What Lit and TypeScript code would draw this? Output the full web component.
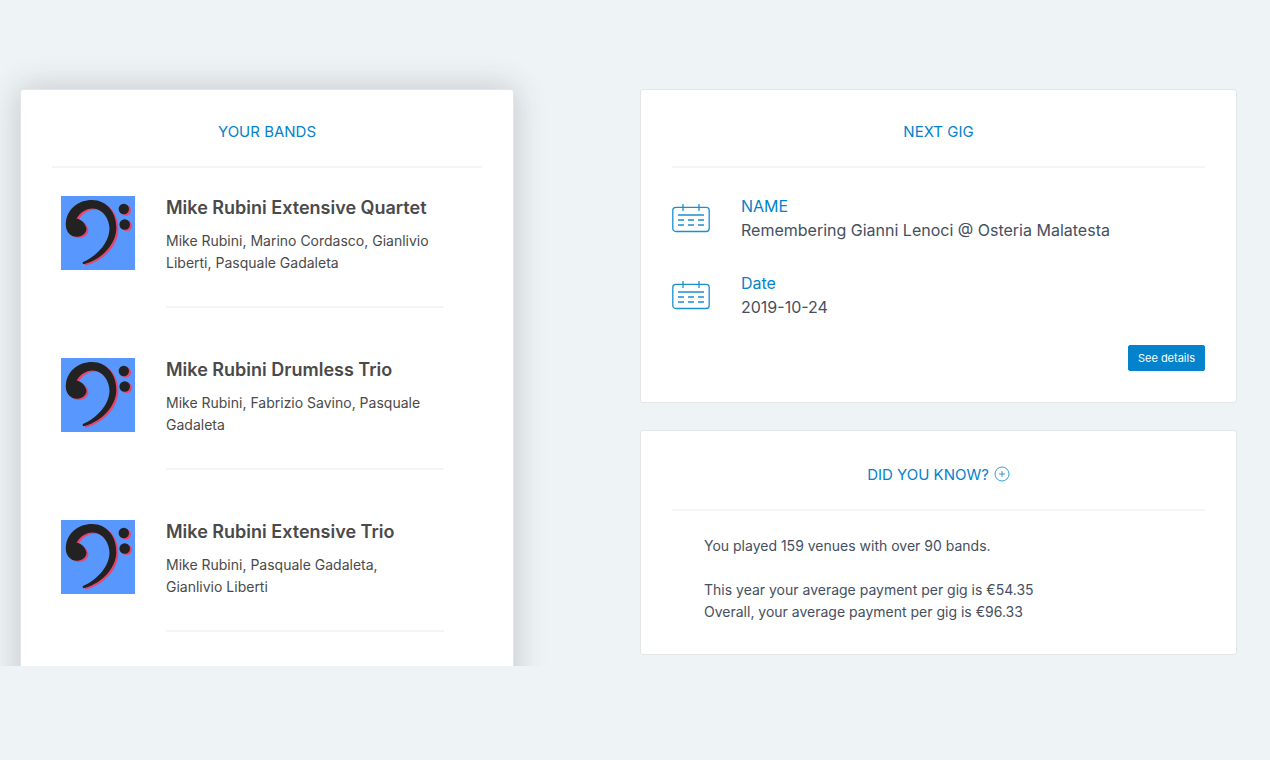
import { LitElement, html, svg, css } from "lit";
import { customElement, property } from "lit/decorators.js";

interface Band {
  name: string;
  members: string;
}

const BANDS: Band[] = [
  { name: "Mike Rubini Extensive Quartet", members: "Mike Rubini, Marino Cordasco, Gianlivio Liberti, Pasquale Gadaleta" },
  { name: "Mike Rubini Drumless Trio", members: "Mike Rubini, Fabrizio Savino, Pasquale Gadaleta" },
  { name: "Mike Rubini Extensive Trio", members: "Mike Rubini, Pasquale Gadaleta, Gianlivio Liberti" },
];

const GIG = [
  { label: "NAME", value: "Remembering Gianni Lenoci @ Osteria Malatesta" },
  { label: "Date", value: "2019-10-24" },
];

const clef = svg`
  <path d="M15.500 22.500C20 15.500 26 12.300 32 12.500C42 13 48.500 23 48.500 33C48 47 36 60 22 66C21 67 22 68.500 23.500 68C42 63 55 47 55.300 33C56 17 46 4 31 4C17 4 7 13 5 25C3.500 35 9 40.700 16 40.700C21.500 40.500 25.500 37 25.500 32.500C24 27 20.500 23.500 15.500 22.500Z" />
  <circle cx="62.800" cy="13" r="5.200" />
  <circle cx="63.700" cy="28.500" r="5.300" />
`;

@customElement("band-avatar")
class BandAvatar extends LitElement {
  static styles = css`
    :host { display: block; }
    .avatar { display: block; width: 74px; height: 74px; background: #5897fd; }
    .echo { fill: #e5456f; }
    .ink { fill: #222; }
  `;
  render() {
    return html`<svg class="avatar" viewBox="0 0 74 74" aria-hidden="true">
      <g class="echo" transform="translate(2 1.300)">${clef}</g>
      <g class="ink">${clef}</g>
    </svg>`;
  }
}

@customElement("panel-card")
class PanelCard extends LitElement {
  @property() heading = "";
  static styles = css`
    :host {
      display: block;
      box-sizing: border-box;
      padding: 30px 31px 31px;
      background: #fff;
      border: 1px solid #e2e6e7;
      border-radius: 3px;
    }
    .head {
      display: flex;
      justify-content: center;
      align-items: flex-end;
      gap: 5px;
      padding-bottom: 22px;
      border-bottom: 2px solid #f5f5f6;
    }
    .title {
      margin: 0;
      font: 400 15px/24px "Inter", sans-serif;
      color: #0482cb;
    }
  `;
  render() {
    return html`
      <header class="head"><h2 class="title">${this.heading}</h2><slot name="action"></slot></header>
      <slot></slot>
    `;
  }
}

@customElement("app-root")
class AppRoot extends LitElement {
  static styles = css`
    :host {
      display: flex;
      flex-direction: column;
      box-sizing: border-box;
      height: 100vh;
      padding-bottom: 94px;
      background: #eef3f6;
      font-family: "Inter", sans-serif;
      color: #454f60;
    }
    .board {
      flex: 1;
      min-height: 0;
      overflow: hidden;
      display: grid;
      grid-template-columns: 494fr 597fr;
      column-gap: 126px;
      align-items: start;
      box-sizing: border-box;
      padding: 89px 33px 0 20px;
    }
    .raised { box-shadow: 0 0 32px rgba(40, 50, 55, 0.24); }
    .bands {
      list-style: none;
      margin: 28px 38px 0 9px;
      padding: 0 0 50px;
      display: grid;
      gap: 50px;
    }
    .band {
      display: grid;
      grid-template-columns: 74px 1fr;
      column-gap: 31px;
    }
    .info {
      padding-bottom: 32px;
      border-bottom: 2px solid #f5f5f6;
      color: #4a4a4a;
    }
    .name { margin: 0 0 10px; font-size: 18px; line-height: 24px; font-weight: 600; }
    .members { margin: 0; padding-right: 10px; font-size: 14px; line-height: 22px; }
    .side { display: grid; gap: 27px; }
    .facts { display: grid; gap: 29px; margin: 26px 0; }
    .fact { display: grid; grid-template-columns: 38px 1fr; column-gap: 31px; align-items: center; }
    .calendar { display: block; width: 38px; height: 30px; fill: none; stroke: #1c8fd2; }
    .text { margin: 0; font-size: 16px; line-height: 24px; }
    .label { color: #0482cb; }
    .footer { display: flex; justify-content: flex-end; }
    .details {
      height: 26px;
      padding: 0 9px;
      border: 1px solid #0482cb;
      border-radius: 2px;
      background: #0482cb;
      color: #fff;
      font: 11px/24px "Inter", sans-serif;
      cursor: pointer;
    }
    .more {
      display: block;
      padding: 5px 0;
      border: 0;
      background: none;
      color: #0482cb;
      cursor: pointer;
    }
    .plus { display: block; width: 16px; height: 16px; fill: none; stroke: currentColor; }
    .trivia { margin: 24px 32px 0; display: grid; gap: 22px; font-size: 14px; line-height: 22px; }
    .line { margin: 0; }
  `;

  private calendar() {
    return html`<svg class="calendar" viewBox="0 0 38 30" stroke-width="1.300" aria-hidden="true">
      <rect x="0.800" y="4.300" width="36.400" height="24.200" rx="3" />
      <path d="M11 1V8M27 1V8M6 12H32" />
      <path d="M6 17H12M16 17H22M26 17H32M6 22H12M16 22H22M26 22H32" />
    </svg>`;
  }

  render() {
    return html`
      <main class="board">
        <panel-card class="raised" heading="YOUR BANDS">
          <ul class="bands">
            ${BANDS.map((band) => html`
              <li class="band">
                <band-avatar></band-avatar>
                <div class="info">
                  <h3 class="name">${band.name}</h3>
                  <p class="members">${band.members}</p>
                </div>
              </li>
            `)}
          </ul>
        </panel-card>
        <div class="side">
          <panel-card heading="NEXT GIG">
            <div class="facts">
              ${GIG.map((fact) => html`
                <div class="fact">
                  ${this.calendar()}
                  <div>
                    <p class="text label">${fact.label}</p>
                    <p class="text">${fact.value}</p>
                  </div>
                </div>
              `)}
            </div>
            <div class="footer"><button class="details">See details</button></div>
          </panel-card>
          <panel-card heading="DID YOU KNOW?">
            <button class="more" slot="action" aria-label="More">
              <svg class="plus" viewBox="0 0 16 16" aria-hidden="true">
                <circle cx="8" cy="8" r="7" stroke-width="0.800" />
                <path d="M5 8H11M8 5V11" stroke-width="0.800" />
              </svg>
            </button>
            <div class="trivia">
              <p class="line">You played 159 venues with over 90 bands.</p>
              <p class="line">This year your average payment per gig is €54.35<br />Overall, your average payment per gig is €96.33</p>
            </div>
          </panel-card>
        </div>
      </main>
    `;
  }
}
